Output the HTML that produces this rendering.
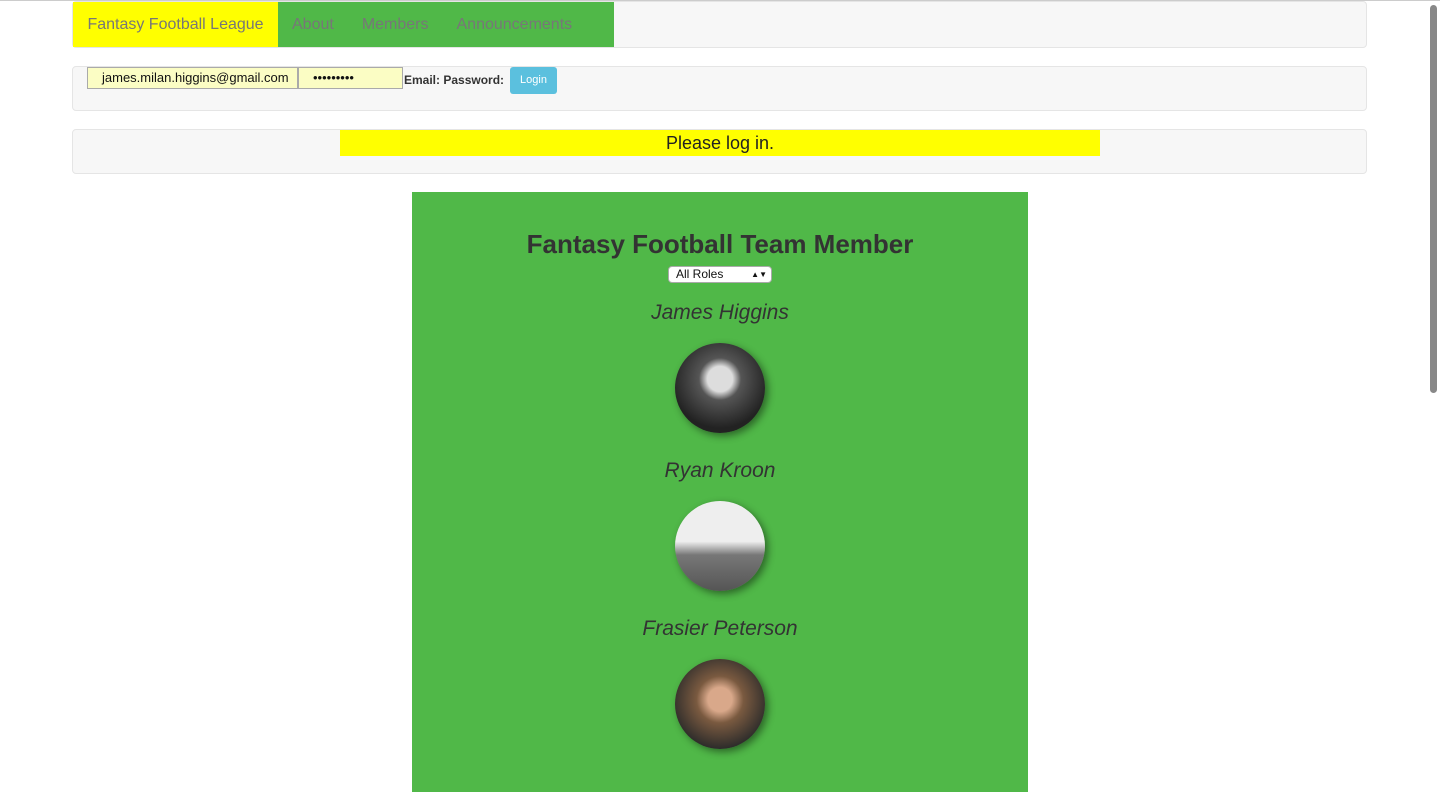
<!DOCTYPE html>
<html><head><style>
body{margin:0;background:#fff;font-family:"Liberation Sans",sans-serif;color:#333;width:1440px;height:779px;overflow:hidden;position:relative;border-top:1px solid #ccc;box-sizing:border-box}
.bar{position:absolute;left:72px;width:1295px;background:#f7f7f7;border:1px solid #e5e5e5;border-radius:4px;box-sizing:border-box}
.nav{top:0;height:47px}
.nav div{position:absolute;top:0;height:45px;line-height:46px;font-size:16px;color:#777}
.lg{top:65px;height:45px}
.msg{top:128px;height:45px}
.inp{position:absolute;top:0;height:22px;background:#fbfdc4;border:1px solid #aaa;box-sizing:border-box;font-size:13px;color:#111;line-height:20px}
.main{position:absolute;left:412px;top:191px;width:616px;height:600px;background:#50b848;text-align:center}
.nm{position:absolute;width:100%;font-style:italic;font-size:21px;color:#333}
.av{position:absolute;left:263px;width:90px;height:90px;border-radius:50%;box-shadow:3px 3px 8px rgba(0,0,0,.45)}
.sb{position:absolute;right:3px;top:4px;width:7px;height:388px;background:#888;border-radius:4px}
</style></head><body>
<div class="bar nav">
<div style="left:0;width:205px;background:#ff0;text-align:center">Fantasy Football League</div>
<div style="left:205px;width:336px;background:#50b848"><span style="margin-left:14px">About</span><span style="margin-left:28px">Members</span><span style="margin-left:28px">Announcements</span></div>
</div>
<div class="bar lg">
<div class="inp" style="left:14px;width:211px;padding-left:14px">james.milan.higgins@gmail.com</div>
<div class="inp" style="left:225px;width:105px;padding-left:14px">•••••••••</div>
<div style="position:absolute;left:331px;top:6px;font-size:12px;font-weight:bold;color:#333">Email: Password:</div>
<div style="position:absolute;left:437px;top:0;width:47px;height:27px;background:#5bc0de;border-radius:3px;color:#fff;font-size:11px;line-height:27px;text-align:center">Login</div>
</div>
<div class="bar msg"><div style="position:absolute;left:267px;top:0;width:760px;height:26px;background:#ff0;text-align:center;font-size:18px;line-height:27px;color:#222">Please log in.</div></div>
<div class="main">
<div style="position:absolute;top:37px;width:100%;font-size:26px;font-weight:bold;color:#333">Fantasy Football Team Member</div>
<div style="position:absolute;left:256px;top:74px;width:104px;height:17px;background:#fff;border-radius:4px;border:1px solid #aaa;box-sizing:border-box;font-size:12px;text-align:left;padding-left:7px;line-height:15px;color:#111">All Roles<span style="position:absolute;right:4px;font-size:8px;top:0">▲▼</span></div>
<div class="nm" style="top:109px">James Higgins</div>
<div class="av" style="top:151px;background:radial-gradient(circle at 50% 40%,#ddd 0 18%,#555 30%,#222 70%)"></div>
<div class="nm" style="top:267px">Ryan Kroon</div>
<div class="av" style="top:309px;background:linear-gradient(#eee 0 45%,#777 60%,#555)"></div>
<div class="nm" style="top:425px">Frasier Peterson</div>
<div class="av" style="top:467px;background:radial-gradient(circle at 50% 45%,#d9a88a 0 18%,#7a5a40 35%,#2a2a2a 75%)"></div>
</div>
<div class="sb"></div>
</body></html>
